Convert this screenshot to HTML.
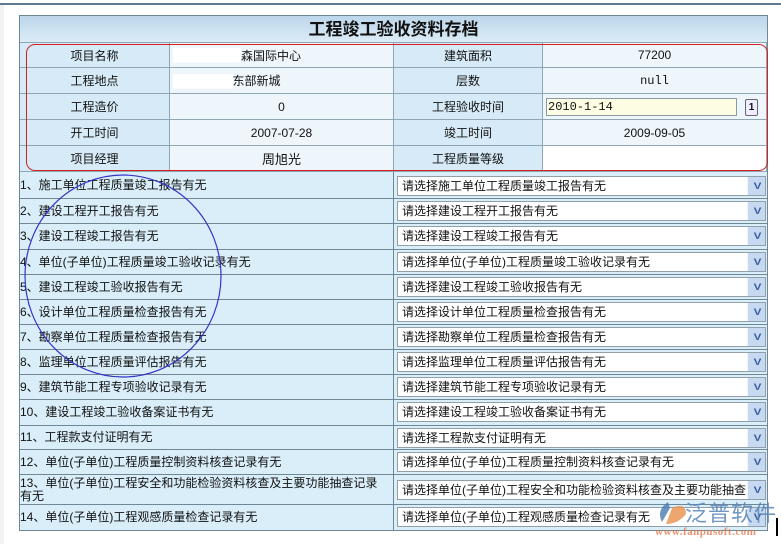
<!DOCTYPE html>
<html><head><meta charset="utf-8"><style>
*{margin:0;padding:0;box-sizing:border-box}
body{width:781px;height:544px;background:#fff;position:relative;overflow:hidden;font-family:"Liberation Sans","Noto Sans CJK SC",sans-serif;font-size:12px;color:#111}
.a{position:absolute}
.c{position:absolute;display:flex;align-items:center;justify-content:center;border-right:1px solid #8fa7b5;border-bottom:1px solid #8fa7b5}
.lb{background:#d6ebf7}
.vl{background:#eef5fb}
.row{position:absolute;left:19px;width:749px;border-bottom:1px solid #6f8896;border-left:1px solid #6f8896;border-right:1px solid #6f8896;background:#d9eef9}
.row .t{position:absolute;left:0;top:0;bottom:0;width:374px;display:flex;align-items:center;line-height:13px;border-right:1px solid #6f8896;padding-right:4px}
.sel{position:absolute;left:377px;width:369px;height:20px;background:#fff;border:1px solid #8fa0ab;font-size:12px;padding-left:4px;line-height:18px;white-space:nowrap;overflow:hidden}
.sel .b{position:absolute;right:0;top:0;width:15px;height:18px;background:#c6d9f1;color:#3a5fa0;font-size:9px;font-weight:bold;text-align:center;line-height:18px;transform:scaleX(1.3)}
</style></head><body>
<div class="a" style="left:0;top:3px;width:781px;height:2px;background:#5e7a8c"></div>
<div class="a" style="left:0;top:5px;width:4px;height:539px;background:#f2f2f2"></div>
<div class="a" style="left:19px;top:15px;width:749px;height:516px;border:1px solid #6f8896;background:#d9eef9"></div>
<div class="a" style="left:20px;top:16px;width:747px;height:27px;background:linear-gradient(#bcd6ea,#dcecf7);border-bottom:1px solid #8fa7b5;text-align:center;font-size:17px;font-weight:bold;line-height:27px">工程竣工验收资料存档</div>

<div class="c lb" style="left:20px;top:43px;width:150px;height:25px">项目名称</div>
<div class="c vl" style="left:170px;top:43px;width:224px;height:25px;justify-content:flex-start;padding-left:3px"><span style="background:#fff;color:#fff">████████</span>森国际中心</div>
<div class="c lb" style="left:394px;top:43px;width:149px;height:25px">建筑面积</div>
<div class="c vl" style="left:543px;top:43px;width:224px;height:25px">77200</div>

<div class="c lb" style="left:20px;top:68px;width:150px;height:26px">工程地点</div>
<div class="c vl" style="left:170px;top:68px;width:224px;height:26px;justify-content:flex-start;padding-left:3px"><span style="background:#fff;color:#fff">███████</span>东部新城</div>
<div class="c lb" style="left:394px;top:68px;width:149px;height:26px">层数</div>
<div class="c vl" style="left:543px;top:68px;width:224px;height:26px;font-family:'Liberation Mono',monospace">null</div>

<div class="c lb" style="left:20px;top:94px;width:150px;height:26px">工程造价</div>
<div class="c vl" style="left:170px;top:94px;width:224px;height:26px">0</div>
<div class="c lb" style="left:394px;top:94px;width:149px;height:26px">工程验收时间</div>
<div class="c vl" style="left:543px;top:94px;width:224px;height:26px"></div>
<div class="a" style="left:546px;top:98px;width:191px;height:18px;background:#fdfde4;border:1px solid #8a9aa6;font-family:'Liberation Mono',monospace;font-size:12px;line-height:16px;padding-left:1px">2010-1-14</div>
<div class="a" style="left:745px;top:99px;width:13px;height:17px;border:1px solid #667;border-radius:2px;background:#eef;font-size:10px;font-weight:bold;text-align:center;line-height:15px">1</div>

<div class="c lb" style="left:20px;top:120px;width:150px;height:26px">开工时间</div>
<div class="c vl" style="left:170px;top:120px;width:224px;height:26px">2007-07-28</div>
<div class="c lb" style="left:394px;top:120px;width:149px;height:26px">竣工时间</div>
<div class="c vl" style="left:543px;top:120px;width:224px;height:26px">2009-09-05</div>

<div class="c lb" style="left:20px;top:146px;width:150px;height:26px">项目经理</div>
<div class="c vl" style="left:170px;top:146px;width:224px;height:26px;font-size:13px">周旭光</div>
<div class="c lb" style="left:394px;top:146px;width:149px;height:26px">工程质量等级</div>
<div class="c" style="left:543px;top:146px;width:224px;height:26px;background:#fff"></div>
<div class="a" style="left:26px;top:44px;width:742px;height:127px;border:1.5px solid #d62020;border-radius:9px"></div>

<div class="row" style="top:172px;height:27px"><div class="t">1、施工单位工程质量竣工报告有无</div><div class="sel" style="top:4px">请选择施工单位工程质量竣工报告有无<div class="b">V</div></div></div>
<div class="row" style="top:199px;height:25px"><div class="t">2、建设工程开工报告有无</div><div class="sel" style="top:2px">请选择建设工程开工报告有无<div class="b">V</div></div></div>
<div class="row" style="top:224px;height:26px"><div class="t">3、建设工程竣工报告有无</div><div class="sel" style="top:2px">请选择建设工程竣工报告有无<div class="b">V</div></div></div>
<div class="row" style="top:250px;height:25px"><div class="t">4、单位(子单位)工程质量竣工验收记录有无</div><div class="sel" style="top:2px">请选择单位(子单位)工程质量竣工验收记录有无<div class="b">V</div></div></div>
<div class="row" style="top:275px;height:25px"><div class="t">5、建设工程竣工验收报告有无</div><div class="sel" style="top:2px">请选择建设工程竣工验收报告有无<div class="b">V</div></div></div>
<div class="row" style="top:300px;height:25px"><div class="t">6、设计单位工程质量检查报告有无</div><div class="sel" style="top:2px">请选择设计单位工程质量检查报告有无<div class="b">V</div></div></div>
<div class="row" style="top:325px;height:25px"><div class="t">7、勘察单位工程质量检查报告有无</div><div class="sel" style="top:2px">请选择勘察单位工程质量检查报告有无<div class="b">V</div></div></div>
<div class="row" style="top:350px;height:25px"><div class="t">8、监理单位工程质量评估报告有无</div><div class="sel" style="top:2px">请选择监理单位工程质量评估报告有无<div class="b">V</div></div></div>
<div class="row" style="top:375px;height:25px"><div class="t">9、建筑节能工程专项验收记录有无</div><div class="sel" style="top:2px">请选择建筑节能工程专项验收记录有无<div class="b">V</div></div></div>
<div class="row" style="top:400px;height:26px"><div class="t">10、建设工程竣工验收备案证书有无</div><div class="sel" style="top:2px">请选择建设工程竣工验收备案证书有无<div class="b">V</div></div></div>
<div class="row" style="top:426px;height:24px"><div class="t">11、工程款支付证明有无</div><div class="sel" style="top:2px">请选择工程款支付证明有无<div class="b">V</div></div></div>
<div class="row" style="top:450px;height:25px"><div class="t">12、单位(子单位)工程质量控制资料核查记录有无</div><div class="sel" style="top:2px">请选择单位(子单位)工程质量控制资料核查记录有无<div class="b">V</div></div></div>
<div class="row" style="top:475px;height:30px"><div class="t">13、单位(子单位)工程安全和功能检验资料核查及主要功能抽查记录有无</div><div class="sel" style="top:5px">请选择单位(子单位)工程安全和功能检验资料核查及主要功能抽查<div class="b">V</div></div></div>
<div class="row" style="top:505px;height:26px"><div class="t">14、单位(子单位)工程观感质量检查记录有无</div><div class="sel" style="top:2px">请选择单位(子单位)工程观感质量检查记录有无<div class="b">V</div></div></div>

<svg class="a" style="left:0;top:0" width="781" height="544"><ellipse cx="123" cy="276" rx="98" ry="101" fill="none" stroke="#3535c8" stroke-width="1.2"/>
<path d="M668 502 q-12 8 -6 20 l8 -14 z" fill="#4a7bb0" opacity=".8"/><path d="M672 508 q14 -6 14 6 q-8 10 -20 10 z" fill="#e8914a" opacity=".8"/></svg>
<div class="a" style="left:685px;top:496px;font-size:22px;color:#5a86b8;opacity:.85;letter-spacing:1px">泛普软件</div>
<div class="a" style="left:655px;top:526px;font-size:11px;color:#e07040;opacity:.75;font-family:'Liberation Serif',serif;font-weight:bold;letter-spacing:.5px">www.fanpusoft.com</div>
<div class="a" style="left:776px;top:518px;width:2px;height:18px;background:#000"></div>
</body></html>
